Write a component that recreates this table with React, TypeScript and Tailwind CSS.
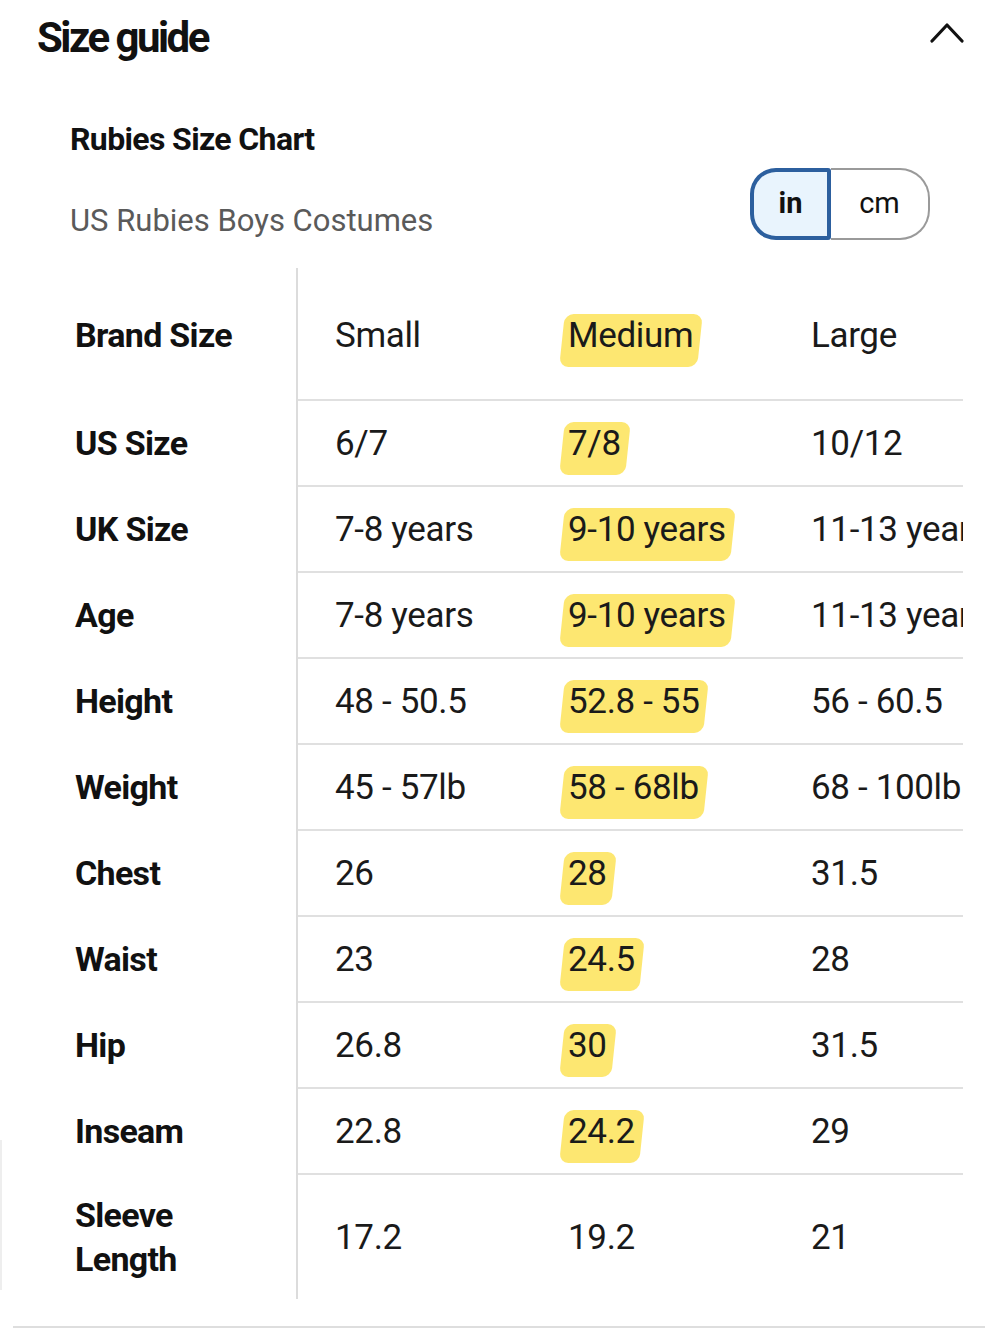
import React from "react";

const rows: { label: string[]; vals: [string, string, string]; hl?: boolean; h: string }[] = [
  { label: ["US Size"], vals: ["6/7", "7/8", "10/12"], hl: true, h: "h-[86px]" },
  { label: ["UK Size"], vals: ["7-8 years", "9-10 years", "11-13 years"], hl: true, h: "h-[86px]" },
  { label: ["Age"], vals: ["7-8 years", "9-10 years", "11-13 years"], hl: true, h: "h-[86px]" },
  { label: ["Height"], vals: ["48 - 50.5", "52.8 - 55", "56 - 60.5"], hl: true, h: "h-[86px]" },
  { label: ["Weight"], vals: ["45 - 57lb", "58 - 68lb", "68 - 100lb"], hl: true, h: "h-[86px]" },
  { label: ["Chest"], vals: ["26", "28", "31.5"], hl: true, h: "h-[86px]" },
  { label: ["Waist"], vals: ["23", "24.5", "28"], hl: true, h: "h-[86px]" },
  { label: ["Hip"], vals: ["26.8", "30", "31.5"], hl: true, h: "h-[86px]" },
  { label: ["Inseam"], vals: ["22.8", "24.2", "29"], hl: true, h: "h-[86px]" },
  { label: ["Sleeve", "Length"], vals: ["17.2", "19.2", "21"], hl: false, h: "h-[126px]" },
];

const font = { fontFamily: "Roboto, 'Liberation Sans', sans-serif" };

function Hl({ children, on }: { children: React.ReactNode; on: boolean }) {
  if (!on) return <span>{children}</span>;
  return (
    <span className="relative inline-block">
      <span className="absolute left-[-6px] right-[-7px] top-[4px] bottom-[-4px] bg-[#fde462] rounded-[9px] -skew-x-6 opacity-90" />
      <span className="relative">{children}</span>
    </span>
  );
}

function DataCells({ vals, hl }: { vals: [string, string, string]; hl: boolean }) {
  return (
    <div className="flex items-center h-full whitespace-nowrap text-[35px] tracking-[-0.01em] text-[#1a1a1a]">
      <div className="w-[233px] shrink-0 pl-[37px]">{vals[0]}</div>
      <div className="w-[243px] shrink-0 pl-[37px]">
        <Hl on={hl}>{vals[1]}</Hl>
      </div>
      <div className="w-[240px] shrink-0 pl-[37px]">{vals[2]}</div>
    </div>
  );
}

export default function App() {
  return (
    <div className="w-[1000px] h-[1333px] bg-white relative overflow-hidden" style={font}>
      <div className="absolute left-0 top-[1140px] h-[150px] w-[2px] bg-[#eeeeee]" />
      {/* Header */}
      <div className="flex items-start justify-between pl-[37px] pr-[36px] pt-[12px] h-[100px]">
        <h1 className="text-[42px] font-bold tracking-[-0.06em] text-[#111] leading-[52px]">Size guide</h1>
        <svg width="34" height="22" viewBox="0 0 34 22" className="mt-[9px]">
          <polyline points="2,20 17,4 32,20" fill="none" stroke="#111" strokeWidth="3.2" strokeLinecap="round" strokeLinejoin="round" />
        </svg>
      </div>

      {/* Chart title */}
      <div className="pl-[70px] pr-[70px] flex items-end justify-between h-[168px] pb-[28px]">
        <div className="flex flex-col">
          <div className="text-[32px] font-bold tracking-[-0.02em] text-[#111] leading-[38px] mb-[44px]">Rubies Size Chart</div>
          <div className="text-[31px] text-[#5a5a5a] leading-[38px]">US Rubies Boys Costumes</div>
        </div>
        <div className="flex h-[72px]">
          <div className="w-[81px] h-full flex items-center justify-center border-[4px] border-[#2c5f9e] rounded-l-[26px] rounded-r-[3px] bg-[#e9f4fd] text-[29px] font-bold text-[#111]">
            in
          </div>
          <div className="w-[99px] h-full flex items-center justify-center border-2 border-l-0 border-[#9a9a9a] rounded-r-[30px] text-[29px] text-[#111]">
            cm
          </div>
        </div>
      </div>

      {/* Table */}
      <div className="flex flex-col">
        <div className="flex h-[131px]">
          <div className="w-[296px] shrink-0 pl-[75px] pt-[4px] flex items-center text-[34px] font-bold tracking-[-0.02em] text-[#111]">Brand Size</div>
          <div className="w-[667px] overflow-hidden border-l-2 border-[#dcdcdc] pt-[5px]">
            <DataCells vals={["Small", "Medium", "Large"]} hl={true} />
          </div>
        </div>
        {rows.map((r, i) => (
          <div key={i} className={`flex ${r.h}`}>
            <div className="w-[296px] shrink-0 pl-[75px] pt-[2px] flex flex-col justify-center text-[34px] font-bold tracking-[-0.02em] text-[#111] leading-[44px]">
              {r.label.map((l) => (
                <span key={l}>{l}</span>
              ))}
            </div>
            <div className="w-[667px] overflow-hidden border-l-2 border-[#dcdcdc]">
              <div className="h-full border-t-2 border-[#e0e0e0] pt-[3px]">
                <DataCells vals={r.vals} hl={!!r.hl} />
              </div>
            </div>
          </div>
        ))}
      </div>
      <div className="mt-[27px] ml-[13px] w-[972px] h-[2px] bg-[#dedede]" />
    </div>
  );
}
